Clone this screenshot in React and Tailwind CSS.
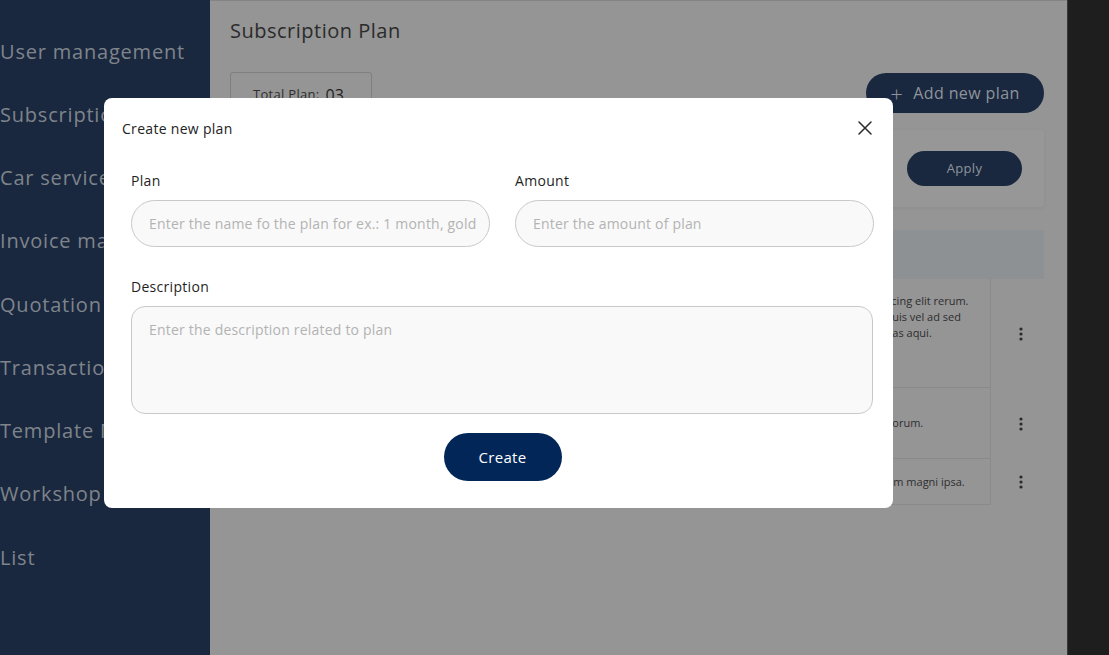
import React from 'react';

const font = { fontFamily: '"Open Sans", "Noto Sans", sans-serif' };

const navItems = [
  'User management',
  'Subscription plan',
  'Car service',
  'Invoice management',
  'Quotation',
  'Transaction',
  'Template Management',
  'Workshop',
  'List',
];

const rows = [
  { h: 'h-[109px]', lines: ['Lorem ipsum dolor sit amet consectetur adipisicing elit rerum.', 'Voluptatibus aut accusantium corporis rerum quis vel ad sed', 'Ducimus eveniet facere odit autem dolorum quas aqui.'], pt: 'pt-[14px]' },
  { h: 'h-[71px]', lines: ['Lorem ipsum dolor sit amet consectetur elit laborum.'], pt: 'pt-[27px]' },
  { h: 'h-[46px]', lines: ['Dolor sit amet consectetur, adipisicing elit. Earum magni ipsa.'], pt: 'pt-[15px]' },
];

const Kebab = () => (
  <svg width="4" height="14" viewBox="0 0 4 14" className="text-[#2a2a2a]">
    <circle cx="2" cy="2" r="1.6" fill="currentColor" />
    <circle cx="2" cy="7" r="1.6" fill="currentColor" />
    <circle cx="2" cy="12" r="1.6" fill="currentColor" />
  </svg>
);

const inputCls =
  'mt-[9px] h-[47px] w-full rounded-full border border-[#c9c9c9] bg-[#f9f9f9] pl-[17px] text-[14px] tracking-[0.2px] outline-none placeholder:text-[#b3b3b3]';

export default function App() {
  return (
    <div className="relative flex h-[655px] w-[1109px] overflow-hidden" style={font}>
      {/* Sidebar */}
      <aside className="w-[210px] shrink-0 overflow-hidden bg-[#19283f] pt-[20px]">
        {navItems.map((item) => (
          <div key={item} className="flex h-[63.25px] items-center whitespace-nowrap text-[20px] tracking-[0.8px] text-[#7f848b]">
            {item}
          </div>
        ))}
      </aside>

      {/* Main */}
      <main className="flex-1 border-t border-[#848484] bg-[#959595] pl-[20px] pr-[23px]">
        <h1 className="pt-[15px] text-[20px] leading-[30px] tracking-[0.5px] text-[#2b2b2b]">Subscription Plan</h1>

        <div className="mt-[26px] flex items-start justify-between">
          <div className="flex h-[44px] w-[142px] items-center gap-[6px] rounded-[3px] border border-[#7f7f7f] pl-[22px] pt-[2px]">
            <span className="text-[13px] tracking-[0.3px] text-[#2e2e2e]">Total Plan:</span>
            <span className="text-[16px] text-[#1f1f1f]">03</span>
          </div>
          <button className="mt-[1px] flex h-[40px] w-[178px] items-center justify-center gap-[10px] rounded-full bg-[#19283f] text-[16px] tracking-[0.4px] text-[#8f949b]">
            <span className="text-[22px] font-light leading-none">+</span>
            <span>Add new plan</span>
          </button>
        </div>

        <div className="mt-[14px] flex h-[77px] items-center justify-end rounded-[4px] bg-[#979797] pr-[22px] shadow-[0_1px_4px_rgba(0,0,0,0.06)]">
          <button className="h-[35px] w-[115px] rounded-full bg-[#19283f] text-[13px] tracking-[0.3px] text-[#8f949b]">Apply</button>
        </div>

        <div className="mt-[23px]">
          <div className="h-[49px] bg-[#8d9194]" />
          {rows.map((r, i) => (
            <div key={i} className={`flex ${r.h}`}>
              <div className="flex-1 border-b border-r border-[#8a8a8a]">
                <div className={`pl-[420px] ${r.pt} text-[11px] leading-[16px] text-[#2e2e2e]`}>
                  {r.lines.map((l) => (
                    <div key={l} className="whitespace-nowrap">{l}</div>
                  ))}
                </div>
              </div>
              <div className="flex w-[53px] items-center justify-center pl-[6px]">
                <Kebab />
              </div>
            </div>
          ))}
        </div>
      </main>

      {/* Right edge */}
      <div className="w-[42px] shrink-0 border-l border-[#383838] bg-[#1e1e1e]" />

      {/* Modal */}
      <div className="absolute left-[104px] top-[98px] h-[410px] w-[789px] rounded-[8px] bg-white">
        <div className="mt-[19px] flex h-[22px] items-center justify-between pl-[18px] pr-[21px]">
          <span className="text-[14px] tracking-[0.3px] text-[#222]">Create new plan</span>
          <svg width="14" height="14" viewBox="0 0 14 14" fill="none" stroke="#2b2b2b" strokeWidth="1.5" strokeLinecap="round">
            <path d="M1 1L13 13M13 1L1 13" />
          </svg>
        </div>

        <div className="mt-[32px] pl-[27px] pr-[19px]">
          <div className="flex gap-[25px]">
            <div className="w-[359px] shrink-0">
              <label className="block h-[20px] text-[14px] font-medium leading-[20px] tracking-[0.3px] text-[#1f1f1f]">Plan</label>
              <input className={inputCls} placeholder="Enter the name fo the plan for ex.: 1 month, gold" style={font} />
            </div>
            <div className="w-[359px] shrink-0">
              <label className="block h-[20px] text-[14px] font-medium leading-[20px] tracking-[0.3px] text-[#1f1f1f]">Amount</label>
              <input className={inputCls} placeholder="Enter the amount of plan" style={font} />
            </div>
          </div>

          <label className="mt-[30px] block h-[20px] text-[14px] font-medium leading-[20px] tracking-[0.3px] text-[#1f1f1f]">Description</label>
          <textarea
            className="mt-[9px] block h-[108px] w-[742px] resize-none rounded-[14px] border border-[#c9c9c9] bg-[#f9f9f9] px-[17px] pt-[12px] text-[14px] tracking-[0.2px] outline-none placeholder:text-[#b3b3b3]"
            placeholder="Enter the description related to plan"
            style={font}
          />

          <div className="mt-[19px] flex justify-center">
            <button className="h-[48px] w-[118px] rounded-full bg-[#022658] text-[15px] font-medium tracking-[0.3px] text-white">Create</button>
          </div>
        </div>
      </div>
    </div>
  );
}
